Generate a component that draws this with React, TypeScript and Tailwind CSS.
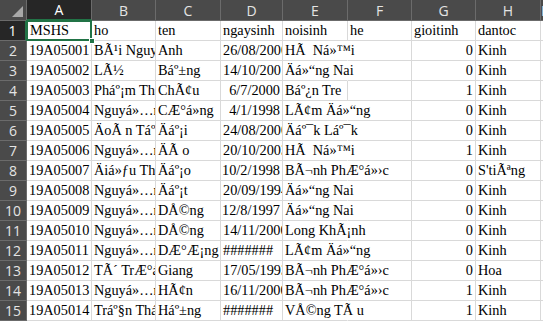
import React from "react";

type Row = {
  a: string;
  b: string;
  c: string;
  d: string;
  dRight?: boolean;
  e: string;
  eOver?: boolean;
  f?: string;
  g: string;
  gRight?: boolean;
  h: string;
};

const rows: Row[] = [
  { a: "MSHS", b: "ho", c: "ten", d: "ngaysinh", e: "noisinh", f: "he", g: "gioitinh", h: "dantoc" },
  { a: "19A05001", b: "BÃ¹i Nguyá»…n", c: "Anh", d: "26/08/2000", e: "HÃ\u00a0 Ná»™i", eOver: true, g: "0", gRight: true, h: "Kinh" },
  { a: "19A05002", b: "LÃ½", c: "Báº±ng", d: "14/10/2001", e: "Äá»“ng Nai", eOver: true, g: "0", gRight: true, h: "Kinh" },
  { a: "19A05003", b: "Pháº¡m Thá»‹", c: "ChÃ¢u", d: "6/7/2000", dRight: true, e: "Báº¿n Tre", g: "1", gRight: true, h: "Kinh" },
  { a: "19A05004", b: "Nguyá»…n", c: "CÆ°á»ng", d: "4/1/1998", dRight: true, e: "LÃ¢m Äá»“ng", eOver: true, g: "0", gRight: true, h: "Kinh" },
  { a: "19A05005", b: "ÄoÃ n Táº¥n", c: "Äáº¡i", d: "24/08/2000", e: "Äáº¯k Láº¯k", eOver: true, g: "0", gRight: true, h: "Kinh" },
  { a: "19A05006", b: "Nguyá»…n", c: "ÄÃ\u00a0o", d: "20/10/2003", e: "HÃ\u00a0 Ná»™i", eOver: true, g: "1", gRight: true, h: "Kinh" },
  { a: "19A05007", b: "Äiá»ƒu Thá»‹", c: "Äáº¡o", d: "10/2/1998", dRight: true, e: "BÃ¬nh PhÆ°á»›c", eOver: true, g: "0", gRight: true, h: "S'tiÃªng" },
  { a: "19A05008", b: "Nguyá»…n", c: "Äáº¡t", d: "20/09/1994", e: "Äá»“ng Nai", eOver: true, g: "0", gRight: true, h: "Kinh" },
  { a: "19A05009", b: "Nguyá»…n", c: "DÅ©ng", d: "12/8/1997", dRight: true, e: "Äá»“ng Nai", eOver: true, g: "0", gRight: true, h: "Kinh" },
  { a: "19A05010", b: "Nguyá»…n", c: "DÅ©ng", d: "14/11/2000", e: "Long KhÃ¡nh", eOver: true, g: "0", gRight: true, h: "Kinh" },
  { a: "19A05011", b: "Nguyá»…n", c: "DÆ°Æ¡ng", d: "#######", e: "LÃ¢m Äá»“ng", eOver: true, g: "0", gRight: true, h: "Kinh" },
  { a: "19A05012", b: "TÃ´ TrÆ°á»ng", c: "Giang", d: "17/05/1993", e: "BÃ¬nh PhÆ°á»›c", eOver: true, g: "0", gRight: true, h: "Hoa" },
  { a: "19A05013", b: "Nguyá»…n", c: "HÃ¢n", d: "16/11/2000", e: "BÃ¬nh PhÆ°á»›c", eOver: true, g: "1", gRight: true, h: "Kinh" },
  { a: "19A05014", b: "Tráº§n Thá»‹", c: "Háº±ng", d: "#######", e: "VÅ©ng TÃ\u00a0u", eOver: true, g: "1", gRight: true, h: "Kinh" },
];

const cols = ["A", "B", "C", "D", "E", "F", "G", "H", "I"];

function Cell({
  text,
  right,
  over,
  noBorderRight,
}: {
  text?: string;
  right?: boolean;
  over?: boolean;
  noBorderRight?: boolean;
}) {
  return (
    <div
      className={
        "h-[20px] border-b border-[#d9d9d9] flex items-end pb-[1px] whitespace-nowrap text-[14.3px] leading-[17px] text-black " +
        (noBorderRight ? "border-r border-r-transparent " : "border-r ") +
        (over ? "overflow-visible " : "overflow-hidden ") +
        (right ? "justify-end pr-[2px]" : "pl-[2px]")
      }
    >
      {text ?? ""}
    </div>
  );
}

export default function App() {
  return (
    <div
      className="w-[543px] h-[322px] overflow-hidden bg-white"
      style={{ fontFamily: '"Liberation Serif", "Times New Roman", serif' }}
    >
      <div className="grid grid-cols-[27px_65px_64px_65px_62px_65px_64px_64px_65px_1fr]">
        {/* corner */}
        <div className="h-[21px] bg-[#4a4a4a] border-r border-b border-[#6b6b6b] relative">
          <div className="absolute right-[3px] bottom-[3px] w-0 h-0 border-l-[11px] border-l-transparent border-b-[11px] border-b-[#a8a8a8]" />
        </div>
        {cols.map((c, i) => (
          <div
            key={c}
            className={
              "h-[21px] flex items-center justify-center text-[14px] border-r " +
              (i === 0
                ? "bg-[#262626] text-white border-r-[#6b6b6b] border-b-2 border-b-[#217346]"
                : "bg-[#4a4a4a] text-[#e4e4e4] border-r-[#6b6b6b] border-b border-b-[#6b6b6b]")
            }
            style={{ fontFamily: '"Open Sans", "Liberation Sans", sans-serif' }}
          >
            {c}
          </div>
        ))}
        {rows.map((r, idx) => (
          <React.Fragment key={idx}>
            <div
              className={
                "h-[20px] flex items-center justify-center text-[14px] border-b " +
                (idx === 0
                  ? "bg-[#262626] text-white border-b-[#6b6b6b] border-r-2 border-r-[#217346]"
                  : "bg-[#4a4a4a] text-[#e4e4e4] border-b-[#6b6b6b] border-r border-r-[#6b6b6b]")
              }
              style={{ fontFamily: '"Open Sans", "Liberation Sans", sans-serif' }}
            >
              {idx + 1}
            </div>
            {idx === 0 ? (
              <div className="h-[20px] relative border-r border-b border-[#d9d9d9]">
                <div className="absolute -left-[1px] -top-[1px] w-[66px] h-[21px] border-2 border-[#217346] flex items-end pl-[2px] pb-[0px] text-[14.3px] leading-[17px] text-black">
                  {r.a}
                </div>
                <div className="absolute -right-[4px] -bottom-[4px] w-[6px] h-[6px] bg-[#217346] border border-white z-10" />
              </div>
            ) : (
              <Cell text={r.a} />
            )}
            <Cell text={r.b} />
            <Cell text={r.c} />
            <Cell text={r.d} right={r.dRight} />
            <Cell text={r.e} over={r.eOver} noBorderRight={r.eOver} />
            <Cell text={r.f} />
            <Cell text={r.g} right={r.gRight} />
            <Cell text={r.h} />
            <Cell />
          </React.Fragment>
        ))}
      </div>
    </div>
  );
}
